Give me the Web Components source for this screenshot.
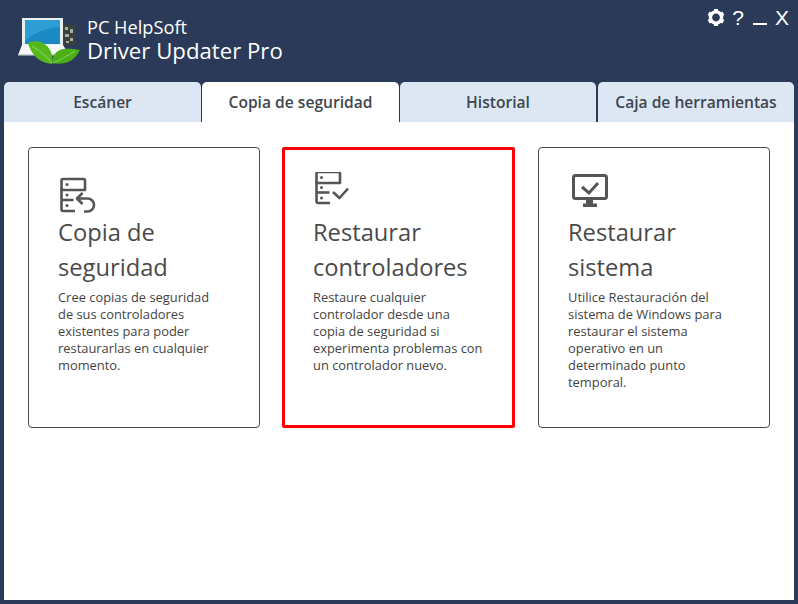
<!DOCTYPE html>
<html lang="es">
<head>
<meta charset="utf-8">
<title>Driver Updater Pro</title>
<style>
  html, body { margin: 0; height: 100%; }
  body { background: #2a3a58; font-family: "Open Sans", "Noto Sans", sans-serif; overflow: hidden; }
</style>
</head>
<body>
<app-window>
  <app-header slot="header"></app-header>
  <tab-bar slot="tabs">
    <tab-item>Escáner</tab-item>
    <tab-item active>Copia de seguridad</tab-item>
    <tab-item>Historial</tab-item>
    <tab-item>Caja de herramientas</tab-item>
  </tab-bar>
  <action-card heading="Copia de seguridad">
    <!-- origen del icono: 58,172 -->
    <svg slot="icon" width="44" height="44" viewBox="0 0 44 44" fill="none" stroke="#555" stroke-width="2.6" stroke-linejoin="round">
      <path d="M3.500 8.500a1.500 1.500 0 0 1 1.500-1.500h20.500a1.500 1.500 0 0 1 1.500 1.500v9.500H5a1.500 1.500 0 0 1-1.500-1.500z"/>
      <path d="M3.500 16v21.500a1.500 1.500 0 0 0 1.500 1.500h12"/>
      <path d="M3.500 28h12"/>
      <circle cx="9" cy="12.500" r="1.500" fill="#555" stroke="none"/>
      <circle cx="9" cy="23" r="1.500" fill="#555" stroke="none"/>
      <circle cx="9" cy="33.500" r="1.500" fill="#555" stroke="none"/>
      <path d="M19 26.500h10a6.500 6.500 0 0 1 7 6.500c0 3.500-3 6.500-6.500 6.500H26"/>
      <path d="M24.500 21 19 26.500l5.500 5.500"/>
    </svg>
    Cree copias de seguridad de sus controladores existentes para poder restaurarlas en cualquier momento.
  </action-card>
  <action-card heading="Restaurar controladores" selected>
    <!-- origen del icono: 313,172 -->
    <svg slot="icon" width="44" height="44" viewBox="0 0 44 44" fill="none" stroke="#555" stroke-width="2.6" stroke-linejoin="round">
      <path d="M3.500 1.500A1.500 1.500 0 0 1 5 0h20.500A1.500 1.500 0 0 1 27 1.500V11H5a1.500 1.500 0 0 1-1.500-1.500z"/>
      <path d="M3.500 9v20.500A1.500 1.500 0 0 0 5 31h12"/>
      <path d="M3.500 20.500h13"/>
      <circle cx="8.500" cy="5.500" r="1.500" fill="#555" stroke="none"/>
      <circle cx="8.500" cy="15.500" r="1.500" fill="#555" stroke="none"/>
      <circle cx="8.500" cy="26" r="1.500" fill="#555" stroke="none"/>
      <path d="m20 20 6.500 6L35 16.500"/>
    </svg>
    Restaure cualquier controlador desde una<br>copia de seguridad si experimenta problemas con un controlador nuevo.
  </action-card>
  <action-card heading="Restaurar sistema">
    <!-- origen del icono: 568,172 -->
    <svg slot="icon" width="44" height="44" viewBox="0 0 44 44" fill="none" stroke="#555">
      <rect x="5.500" y="3.500" width="33" height="23" rx="2" stroke-width="3"/>
      <path d="m14 15 7 6 9-10" stroke-width="3"/>
      <path d="M18 27h7v5h-7z" fill="#555" stroke="none"/>
      <path d="M15 31.500h14v3.500H15z" fill="#555" stroke="none"/>
    </svg>
    Utilice Restauración del sistema de Windows para restaurar el sistema operativo en un determinado punto temporal.
  </action-card>
</app-window>

<script>
// ventana principal: cabecera + pestañas + panel blanco
class AppWindow extends HTMLElement {
  constructor() {
    super();
    this.attachShadow({ mode: "open" });
    this.shadowRoot.innerHTML = `
      <style>
        :host { display: flex; flex-direction: column; width: 798px; height: 604px; box-sizing: border-box; padding: 0 4px 4px; }
        .panel { flex: 1; background: #fff; display: flex; gap: 23px; padding: 25px 24px 0; align-items: flex-start; }
      </style>
      <slot name="header"></slot>
      <slot name="tabs"></slot>
      <div class="panel"><slot></slot></div>
    `;
  }
}

class AppHeader extends HTMLElement {
  constructor() {
    super();
    this.attachShadow({ mode: "open" });
    this.shadowRoot.innerHTML = `
      <style>
        :host { display: flex; height: 82px; color: #fff; margin: 0 -4px; }
        .logo { margin: 17px 0 0 17px; width: 64px; height: 50px; flex: none; }
        .brand { margin: 15px 0 0 6px; display: flex; flex-direction: column; }
        .small { font-size: 18.2px; line-height: 24px; }
        .big { font-size: 22.2px; line-height: 24px; }
        .tools { margin-left: auto; padding: 4px 9px 0 0; display: flex; align-items: flex-start; font-size: 21px; line-height: 28px; font-family: "Liberation Sans", sans-serif; }
        .gear { margin: 5px 7px 0 0; }
        .dash { width: 14px; height: 2px; background: #fff; margin: 19px 8px 0 9px; }
      </style>
      <svg class="logo" viewBox="0 0 64 50">
        <path d="M5 1h41v28H5z" fill="#e9eef1"/>
        <path d="M8 3h35v24H8z" fill="#1b8ac4"/>
        <path d="M8 3h35v7c-12 1-26 5-35 14z" fill="#35a6da" opacity=".7"/>
        <path d="M46 8h12v20H46z" fill="#3b3f3a"/>
        <path d="M48 10h3v3h-3zM53 12h3v4h-3zM48 17h4v3h-4zM53 21h3v3h-3zM49 24h3v2h-3z" fill="#a3aea6"/>
        <path d="M5 28h41l6 10H1z" fill="#f4f6f7"/>
        <path d="M1 37h45v1.500H1z" fill="#cfd5d8"/>
        <path d="M11 26c7-3 14-2 19 3 5 5 6 12 5 18-8-1-14-4-18-9-3-4-5-8-6-12z" fill="#55b91d"/>
        <path d="M35 46c0-6 3-11 8-13 6-2 13-1 20 0-3 6-7 10-12 12-5 2-11 2-16 1z" fill="#4aae19"/>
        <path d="M15 29c7 4 14 10 20 17M36 46c7-3 14-7 22-12" stroke="#8ed85a" stroke-width="1" fill="none"/>
      </svg>
      <div class="brand">
        <span class="small">PC HelpSoft</span>
        <span class="big">Driver Updater Pro</span>
      </div>
      <div class="tools">
        <svg class="gear" width="18" height="17" viewBox="-9 -8.500 18 17">
          <circle r="5.600" fill="none" stroke="#fff" stroke-width="3.400"/>
          <g fill="#fff">
            <rect x="-2" y="-8.500" width="4" height="3"/>
            <rect x="-2" y="-8.500" width="4" height="3" transform="rotate(60)"/>
            <rect x="-2" y="-8.500" width="4" height="3" transform="rotate(120)"/>
            <rect x="-2" y="-8.500" width="4" height="3" transform="rotate(180)"/>
            <rect x="-2" y="-8.500" width="4" height="3" transform="rotate(240)"/>
            <rect x="-2" y="-8.500" width="4" height="3" transform="rotate(300)"/>
          </g>
        </svg>
        <span>?</span>
        <span class="dash"></span>
        <span>X</span>
      </div>
    `;
  }
}

class TabBar extends HTMLElement {
  constructor() {
    super();
    this.attachShadow({ mode: "open" });
    this.shadowRoot.innerHTML = `
      <style>
        :host { display: grid; grid-template-columns: 197px 197px 196px 197px; gap: 1px; height: 40px; }
      </style>
      <slot></slot>
    `;
  }
}

class TabItem extends HTMLElement {
  constructor() {
    super();
    this.attachShadow({ mode: "open" });
    this.shadowRoot.innerHTML = `
      <style>
        :host { display: flex; align-items: center; justify-content: center; background: #dde7f4; color: #3e4650; border-radius: 5px 5px 0 0; font-size: 15.6px; font-weight: 600; padding-bottom: 1px; box-sizing: border-box; white-space: nowrap; }
        :host([active]) { background: #fff; }
        :host(:last-child) { margin-left: 1px; }
      </style>
      <slot></slot>
    `;
  }
}

class ActionCard extends HTMLElement {
  constructor() {
    super();
    this.attachShadow({ mode: "open" });
    this.shadowRoot.innerHTML = `
      <style>
        :host { display: block; width: 232px; height: 281px; box-sizing: border-box; border: 1px solid #4a4a4a; border-radius: 4px; padding: 24px 29px 0; color: #444; background: #fff; }
        :host([selected]) { border: 3px solid #f00; border-radius: 2px; padding: 22px 28px 0; width: 233px; margin-left: -1px; }
        .icon { height: 44px; }
        .icon ::slotted(svg) { display: block; }
        h2 { margin: -1px 0 4px; font-size: 23.7px; line-height: 35px; font-weight: 400; color: #4a4a4a; }
        p { margin: 0; font-size: 12.9px; line-height: 17px; width: 168px; }
        :host([selected]) p { width: 176px; }
      </style>
      <div class="icon"><slot name="icon"></slot></div>
      <h2></h2>
      <p><slot></slot></p>
    `;
    this.shadowRoot.querySelector("h2").textContent = this.getAttribute("heading");
  }
}

customElements.define("app-window", AppWindow);
customElements.define("app-header", AppHeader);
customElements.define("tab-bar", TabBar);
customElements.define("tab-item", TabItem);
customElements.define("action-card", ActionCard);
</script>
</body>
</html>
